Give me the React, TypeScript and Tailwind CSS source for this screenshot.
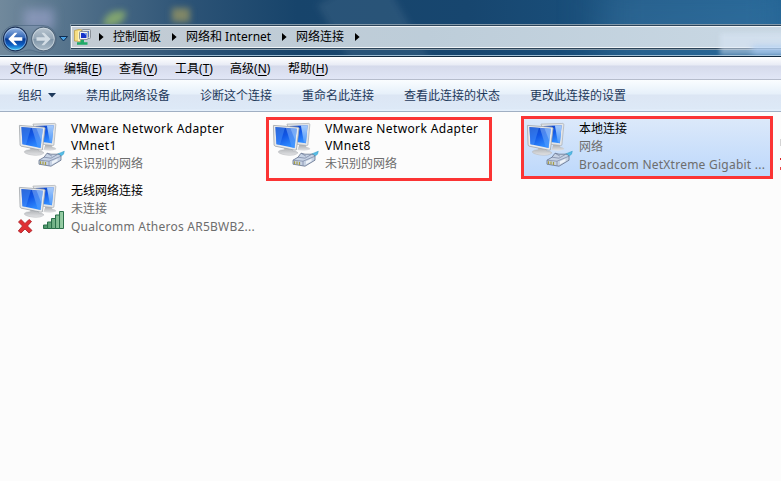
import React from 'react';

interface Connection {
  id: string;
  lines: string[];
  details: string[];
  kind: 'wired' | 'wireless';
  selected?: boolean;
}

const CONNECTIONS: Connection[] = [
  { id: 'vmnet1', lines: ['VMware Network Adapter', 'VMnet1'], details: ['未识别的网络'], kind: 'wired' },
  { id: 'vmnet8', lines: ['VMware Network Adapter', 'VMnet8'], details: ['未识别的网络'], kind: 'wired' },
  { id: 'lan', lines: ['本地连接'], details: ['网络', 'Broadcom NetXtreme Gigabit ...'], kind: 'wired', selected: true },
  { id: 'wlan', lines: ['无线网络连接'], details: ['未连接', 'Qualcomm Atheros AR5BWB2...'], kind: 'wireless' },
];

const MENU = [
  { label: '文件', key: 'F', width: 'w-[54px]' },
  { label: '编辑', key: 'E', width: 'w-[55px]' },
  { label: '查看', key: 'V', width: 'w-[56px]' },
  { label: '工具', key: 'T', width: 'w-[55px]' },
  { label: '高级', key: 'N', width: 'w-[58px]' },
  { label: '帮助', key: 'H', width: 'w-[60px]' },
];

const ACTIONS = ['禁用此网络设备', '诊断这个连接', '重命名此连接', '查看此连接的状态', '更改此连接的设置'];

const isLatin = (text: string) => /^[\x20-\x7e]+$/.test(text);

const Chevron = () => (
  <svg className="h-[8px] w-[5px] shrink-0" viewBox="0 0 5 8">
    <path d="M0 0L4.600 4L0 8Z" fill="#000" />
  </svg>
);

function NavButtons() {
  return (
    <svg className="h-[30px] w-[70px] shrink-0" viewBox="0 0 70 30">
      <defs>
        <linearGradient id="back" x1="0" y1="0" x2="0" y2="1">
          <stop offset="0" stopColor="#9dbce6" />
          <stop offset="0.45" stopColor="#2e62b4" />
          <stop offset="0.5" stopColor="#07388f" />
          <stop offset="0.75" stopColor="#0e5fc4" />
          <stop offset="1" stopColor="#3fd0fb" />
        </linearGradient>
        <linearGradient id="fwd" x1="0" y1="0" x2="0" y2="1">
          <stop offset="0" stopColor="#b9c6d1" />
          <stop offset="0.48" stopColor="#94a6b6" />
          <stop offset="0.52" stopColor="#7f95a8" />
          <stop offset="1" stopColor="#b0c0cc" />
        </linearGradient>
      </defs>
      <path d="M15 1.500H43A13 13 0 0 1 43 28.500C36 28.500 34 26 29 26S22 28.500 15 28.500A13.500 13.500 0 0 1 15 1.500Z" fill="#7890a6" fillOpacity=".45" stroke="#46607b" strokeOpacity=".6" />
      <circle cx="15.300" cy="15" r="11.800" fill="url(#back)" stroke="#1b3157" strokeWidth="1.200" />
      <circle cx="15.300" cy="15" r="10.800" fill="none" stroke="#d5e7fb" strokeOpacity=".6" strokeWidth=".8" />
      <path d="M8.200 15L14.600 8.800H17.400L13.700 13.200H22.300V16.800H13.700L17.400 21.200H14.600Z" fill="#fff" />
      <circle cx="43.500" cy="15" r="11.800" fill="url(#fwd)" stroke="#52677c" strokeWidth="1.200" />
      <circle cx="43.500" cy="15" r="10.800" fill="none" stroke="#d6e0e8" strokeOpacity=".8" strokeWidth=".9" />
      <path d="M50.600 15L44.200 8.800H41.400L45.100 13.200H36.500V16.800H45.100L41.400 21.200H44.200Z" fill="#d3dde5" />
      <path d="M59.500 12.500H67.500L63.500 17Z" fill="#4ba3e4" stroke="#0f2d52" strokeWidth="1" />
    </svg>
  );
}

function FolderNetIcon() {
  return (
    <svg className="h-[18px] w-[18px] shrink-0" viewBox="0 0 18 18">
      <path d="M0.500 2.500L5 1.500L8 2V13.500L0.500 13Z" fill="#f5de84" stroke="#b99a3a" strokeWidth=".7" />
      <path d="M4 3H6V13H4Z" fill="#fdf4bd" />
      <rect x="8" y="1.500" width="8.500" height="9" rx="1" fill="#dfe3e4" stroke="#777f88" strokeWidth=".8" />
      <path d="M10 3H15V9H10Z" fill="#4a7be0" />
      <rect x="5.500" y="3.500" width="8.500" height="8" rx="1" fill="#f2f3ef" stroke="#777f88" strokeWidth=".8" />
      <path d="M7 5H12.500V10H7Z" fill="#1733c8" />
      <path d="M9.500 5H12.500V7.500Z" fill="#6e9cf0" />
      <path d="M6.500 12H10V14.200H13.500V16.700H3V14.200H6.500Z" fill="#20a968" />
    </svg>
  );
}

function ConnectionIcon({ kind }: { kind: Connection['kind'] }) {
  return (
    <svg className="mt-[3px] h-[48px] w-[48px] shrink-0 overflow-visible" viewBox="0 0 48 48">
      <defs>
        <linearGradient id="screen" x1="0" y1="0" x2=".5" y2="1">
          <stop offset="0" stopColor="#0d3fbf" />
          <stop offset="0.5" stopColor="#1157e6" />
          <stop offset="1" stopColor="#2f8bff" />
        </linearGradient>
        <linearGradient id="glare" x1="0" y1="0" x2="0" y2="1">
          <stop offset="0" stopColor="#c2e0ff" />
          <stop offset="1" stopColor="#4d98fb" />
        </linearGradient>
        <linearGradient id="foot" x1="0" y1="0" x2="0" y2="1">
          <stop offset="0" stopColor="#a8abaf" />
          <stop offset="1" stopColor="#e3e4e6" />
        </linearGradient>
        <linearGradient id="bars" x1="0" y1="0" x2="1" y2="0">
          <stop offset="0" stopColor="#4a9466" />
          <stop offset="1" stopColor="#9bd0a8" />
        </linearGradient>
      </defs>
      <g transform="translate(.4 1.600)">
        {/* rear monitor */}
        <path d="M27 22L33 22L34 24.500Q39 25.500 37.500 27Q34 29 25 27.500Z" fill="url(#foot)" />
        <path d="M14.500 1.500L36.500 .8L37.500 1.600L35.500 22.500L34.500 23L23 21.500Z" fill="#e3e5e7" stroke="#a9adb1" strokeWidth=".7" />
        <path d="M17 3.300L35.200 2.700L33.500 20.700L24 19.500Z" fill="url(#screen)" />
        <path d="M28.500 2.900L35.200 2.700L33.500 20.700L31.500 20Z" fill="url(#glare)" fillOpacity=".85" />
        {/* front monitor */}
        <path d="M12 24.500L21 26.500L20.500 28.500Q26 29 25.500 30.500Q22 33.500 14 32.500Q5 31 6 28.800Q7.500 27 12 27.200Z" fill="url(#foot)" stroke="#b5b7ba" strokeWidth=".5" />
        <path d="M1 2.800L25.500 4.600L26.700 5.500L24 27.200L22.500 27.600L2.500 23.500L1.700 22.500Z" fill="#e8eaec" stroke="#9fa4a9" strokeWidth=".8" />
        <path d="M3 4.500L24.400 6.200L22.200 25.400L4 21.700Z" fill="url(#screen)" />
        <path d="M3 4.500L12.500 5.300L7.500 22.400L4 21.700Z" fill="#5ba4ff" fillOpacity=".4" />
        <path d="M13.500 5.400L24.400 6.200L22.200 25.400L19.500 24.800Z" fill="url(#glare)" fillOpacity=".4" />
        <path d="M18 5.700L24.400 6.200L23 18.500Z" fill="#a9d2ff" fillOpacity=".45" />
      </g>
      {kind === 'wired' ? (
        <g transform="translate(0 1.700)">
          <path d="M38 32L46.300 28.500L45.500 31.500L41.500 34.500Z" fill="#54bde6" stroke="#2b94c3" strokeWidth=".5" />
          <path d="M21 37.500L26 34.500L29 30.500L33 31.500L41 31.500L43 33.500L43 37.500L33 43.500L30 43L21 41.500Z" fill="#c6d2e4" stroke="#63718c" strokeWidth=".8" />
          <path d="M21 37.500L31 38.500L43 33.500M31 38.500V43M26 34.500L33 35.500L39 32M29 30.500L34 33.500" fill="none" stroke="#7582a0" strokeWidth=".7" />
          <path d="M22.500 38.500V41.300M25 38.800V41.800M27.500 39.200V42.200" stroke="#a79d45" strokeWidth="1.200" />
          <path d="M34 38.500L39.500 36V38.500L34 41.500Z" fill="#eef3f9" />
        </g>
      ) : (
        <g>
          <path d="M25.500 42H29.500V45.500H25.500ZM29.500 39H33.500V45.500H29.500ZM33.500 35.500H37.500V45.500H33.500ZM37.500 32H41.500V45.500H37.500ZM41.500 28.500H45.500V45.500H41.500Z" fill="url(#bars)" stroke="#2b704b" strokeWidth="1" />
          <path d="M0.500 39L3 36.500L7 40.500L11 36.500L13.500 38.500L9.500 43L14 47.500L11 50L7 46L3 50L0.300 48L4.500 43Z" fill="#e02f33" stroke="#a71b22" strokeWidth=".8" />
        </g>
      )}
    </svg>
  );
}

function ConnectionTile({ item }: { item: Connection }) {
  return (
    <div
      className={`flex h-[59px] w-[249px] pl-[4px] ${
        item.selected ? 'rounded-[2px] border-b border-[#7da2ce] bg-linear-to-b from-[#dce9fa] to-[#bdd8fb]' : ''
      }`}
    >
      <ConnectionIcon kind={item.kind} />
      <div className="ml-[5px] flex flex-col whitespace-nowrap pt-[2px]">
        {item.lines.map((line) => (
          <span key={line} className={`h-[17px] leading-[17px] text-black ${isLatin(line) ? 'tracking-[0.36px]' : ''}`}>
            {line}
          </span>
        ))}
        {item.details.map((line) => (
          <span key={line} className={`h-[18px] leading-[19px] text-[#6d6d6d] ${isLatin(line) ? 'tracking-[0.24px]' : ''}`}>
            {line}
          </span>
        ))}
      </div>
    </div>
  );
}

export default function App() {
  return (
    <div className="relative flex h-[481px] w-[781px] flex-col overflow-hidden bg-[#fcfcfc] font-['Noto_Sans','Noto_Sans_CJK_SC',sans-serif] text-[12px] text-black">
      {/* Glass title area */}
      <header className="relative h-[57px] overflow-hidden border-b border-[#10293f] bg-[linear-gradient(to_right,#71899c_0%,#4b6b86_12%,#2b5275_25%,#17446b_38%,#17466f_60%,#1d5d8e_100%)]">
        <div className="absolute left-[24px] top-[9px] h-[20px] w-[30px] bg-[#a9aeda]/50 blur-[5px]" />
        <div className="absolute left-[103px] top-[11px] h-[15px] w-[23px] rounded-tl-full rounded-br-full bg-[#9bbf68]/70 blur-[3px]" />
        <div className="absolute left-[172px] top-[8px] h-[14px] w-[18px] bg-[#b5a95c]/60 blur-[3px]" />
        <div className="absolute -top-[20px] left-[340px] h-[110px] w-[70px] -rotate-[30deg] bg-white/8 blur-[3px]" />
        <div className="absolute -top-[20px] left-[600px] h-[90px] w-[190px] bg-[#5a9ac6]/25 blur-[20px]" />

        <div className="relative flex h-[55px] pt-[24px]">
          <NavButtons />
          <div className="flex h-[26px] flex-1 border-y border-l border-[#8399aa] bg-[#2c4459] py-px">
            <div className="flex flex-1 items-center border-y border-l border-[#f0f4f7] bg-linear-to-r from-[#c3cbd3] via-[#bdcdd9] to-[#c9d8e4] pl-[2px] whitespace-nowrap">
              <FolderNetIcon />
              <span className="ml-[7px] flex"><Chevron /></span>
              <span className="ml-[9px] w-[48px]">控制面板</span>
              <span className="ml-[11px] flex"><Chevron /></span>
              <span className="ml-[9px] w-[86px]">网络和 Internet</span>
              <span className="ml-[10px] flex"><Chevron /></span>
              <span className="ml-[9px] w-[48px]">网络连接</span>
              <span className="ml-[11px] flex"><Chevron /></span>
            </div>
          </div>
        </div>
        <div className="relative h-px bg-[#9dbcd2]" />
        {/* blurred window showing through the glass */}
        <div className="absolute left-[720px] top-[33px] h-[22px] w-[80px] bg-[#dbe7f8]/50 blur-[2px]" />
        <div className="absolute left-[752px] top-[46px] h-[8px] w-[40px] bg-[#a9cbf2]/80 blur-[3px]" />
      </header>

      {/* Menu bar */}
      <nav className="flex h-[23px] items-center border-b border-[#b6bccc] bg-[linear-gradient(to_bottom,#ffffff_0px,#e8ebf5_8px,#d5daeb_9px,#e1e6f6_22px)] pl-[10px] pt-px">
        {MENU.map((m) => (
          <span key={m.key} className={`${m.width} whitespace-nowrap`}>
            {m.label}(<span className="underline underline-offset-2">{m.key}</span>)
          </span>
        ))}
      </nav>

      {/* Command bar */}
      <div className="flex h-[32px] items-center gap-[30px] border-b border-[#a0afc3] bg-[linear-gradient(to_bottom,#fafdff_0px,#e6f0fa_14px,#dce6f4_15px,#dde9f7_29px,#e4effb_30px)] pl-[18px] whitespace-nowrap text-[#1e395b]">
        <span className="flex w-[38px] items-center gap-[6px]">
          组织
          <svg className="h-[5px] w-[8px] shrink-0" viewBox="0 0 8 5">
            <path d="M0 0H8L4 4.600Z" fill="#1e395b" />
          </svg>
        </span>
        {ACTIONS.map((a) => (
          <span key={a}>{a}</span>
        ))}
      </div>

      {/* Connection list */}
      <main className="grid grid-cols-[254px_254px_254px] auto-rows-[62px] pl-[14px] pt-[6px]">
        {CONNECTIONS.map((item) => (
          <ConnectionTile key={item.id} item={item} />
        ))}
      </main>

      {/* Highlight boxes */}
      <div className="absolute left-[266px] top-[117px] h-[64px] w-[226px] border-3 border-[#fb3434]" />
      <div className="absolute left-[521px] top-[116px] h-[63px] w-[252px] border-3 border-[#fb3434]" />
      <div className="absolute left-[780px] top-[139px] h-[7px] w-px bg-[#d4d4d4]" />
      <div className="absolute left-[780px] top-[158px] h-[2px] w-px bg-[#d22]" />
      <div className="absolute left-[780px] top-[167px] h-[3px] w-px bg-[#e44]" />
    </div>
  );
}
